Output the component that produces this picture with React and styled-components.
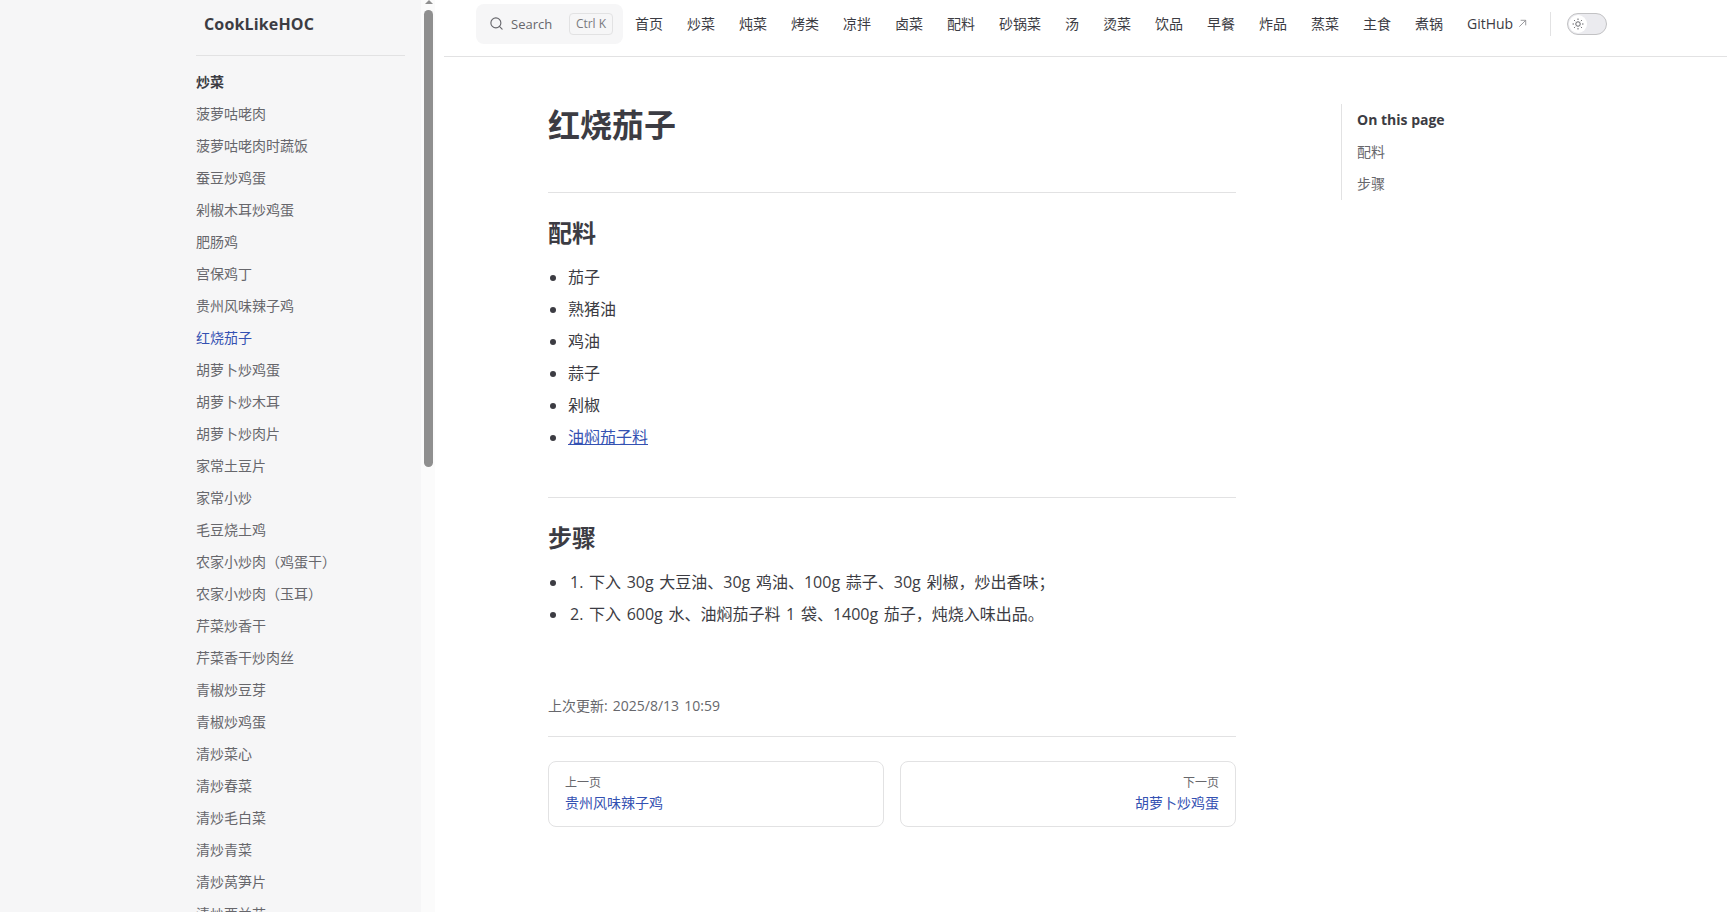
import styled, { createGlobalStyle } from "styled-components";
import { Search } from "lucide-react";

const FONT = `"Open Sans", "Noto Sans CJK SC", sans-serif`;

const GlobalStyle = createGlobalStyle`
  html, body {
    margin: 0;
    height: 100%;
    overflow: hidden;
    background: #ffffff;
  }
  body {
    font-family: ${FONT};
    color: #3c3c43;
  }
  * {
    box-sizing: border-box;
  }
`;

const Page = styled.div`
  display: flex;
  width: 1727px;
  height: 912px;
  overflow: hidden;
`;

const Sidebar = styled.aside`
  flex: none;
  width: 421px;
  height: 912px;
  overflow: hidden;
  background: #f6f6f7;
  padding-left: 196px;
  padding-right: 16px;
`;

const Logo = styled.div`
  height: 48px;
  padding-left: 8px;
  font-size: 16px;
  font-weight: 700;
  line-height: 48px;
  letter-spacing: 0.15px;
  color: #3c3c43;
`;

const SideDivider = styled.div`
  height: 1px;
  margin-top: 7px;
  margin-bottom: 10px;
  background: #e2e2e3;
`;

const SideHeading = styled.div`
  font-size: 14px;
  font-weight: 700;
  line-height: 32px;
  color: #3c3c43;
`;

const SideItem = styled.div`
  font-size: 14px;
  line-height: 32px;
  color: ${({ $active }) => ($active ? "#3451b2" : "#67676c")};
`;

const ScrollTrack = styled.div`
  flex: none;
  width: 14px;
  height: 912px;
  padding-left: 3px;
  background: #fbfbfb;
`;

const ScrollArrow = styled.div`
  width: 0;
  height: 0;
  margin-left: 1px;
  border-left: 4px solid transparent;
  border-right: 4px solid transparent;
  border-bottom: 4px solid #8f8f8f;
`;

const ScrollThumb = styled.div`
  width: 9px;
  height: 457px;
  margin-top: 6px;
  border-radius: 5px;
  background: #8f8f8f;
`;

const Main = styled.div`
  flex: none;
  width: 1292px;
  padding-left: 9px;
`;

const TopBar = styled.header`
  display: flex;
  align-items: center;
  height: 57px;
  padding-left: 32px;
  padding-bottom: 9px;
  border-bottom: 1px solid #e2e2e3;
`;

const SearchBox = styled.div`
  display: flex;
  align-items: center;
  flex: none;
  width: 147px;
  height: 40px;
  padding: 0 10px 0 13px;
  border-radius: 8px;
  background: #f6f6f7;
  color: #67676c;
  font-size: 13px;
`;

const SearchLabel = styled.span`
  margin-left: 7px;
  flex: 1;
`;

const KeyHint = styled.span`
  display: flex;
  align-items: center;
  justify-content: center;
  flex: none;
  width: 44px;
  height: 22px;
  border: 1px solid #e2e2e3;
  border-radius: 4px;
  font-size: 12px;
  color: #7a7a7e;
`;

const NavLinks = styled.nav`
  display: flex;
  align-items: center;
`;

const NavLink = styled.span`
  padding: 0 12px;
  font-size: 14px;
  line-height: 32px;
  color: #3c3c43;
  white-space: nowrap;
`;

const ExternalArrow = styled.svg`
  width: 11px;
  height: 11px;
  margin-left: 4px;
  color: #929295;
`;

const NavDivider = styled.div`
  width: 1px;
  height: 24px;
  margin: 0 16px 0 10px;
  background: #e2e2e3;
`;

const Toggle = styled.div`
  display: flex;
  align-items: center;
  width: 40px;
  height: 22px;
  padding-left: 1px;
  border: 1px solid #c2c2c4;
  border-radius: 11px;
  background: #ebebef;
`;

const ToggleKnob = styled.div`
  display: flex;
  align-items: center;
  justify-content: center;
  width: 18px;
  height: 18px;
  border-radius: 50%;
  background: #ffffff;
  color: #67676c;
`;

const Body = styled.div`
  display: flex;
  padding-left: 104px;
`;

const Article = styled.article`
  flex: none;
  width: 688px;
  padding-top: 48px;
`;

const Title = styled.h1`
  margin: 0;
  font-size: 32px;
  font-weight: 700;
  line-height: 40px;
  color: #3c3c43;
`;

const Section = styled.section`
  margin-top: ${({ $first }) => ($first ? "47px" : "44px")};
  padding-top: 24px;
  border-top: 1px solid #e2e2e3;
`;

const SectionTitle = styled.h2`
  margin: 0 0 12px;
  font-size: 24px;
  font-weight: 700;
  line-height: 32px;
  color: #3c3c43;
`;

const BulletList = styled.ul`
  margin: 0;
  padding: 0 0 0 20px;
`;

const Bullet = styled.li`
  font-size: 16px;
  line-height: 32px;
  color: #3c3c43;
`;

const StepBullet = styled(Bullet)`
  word-spacing: 1.5px;
  & > span {
    padding-left: 2px;
  }
`;

const InlineLink = styled.a`
  color: #3451b2;
  text-decoration: underline;
`;

const Updated = styled.div`
  margin-top: 64px;
  padding-bottom: 18px;
  font-size: 14px;
  line-height: 24px;
  word-spacing: 1.5px;
  color: #67676c;
  border-bottom: 1px solid #e2e2e3;
`;

const Pager = styled.div`
  display: grid;
  grid-template-columns: 1fr 1fr;
  gap: 16px;
  margin-top: 24px;
`;

const PagerCard = styled.div`
  height: 66px;
  padding: 11px 16px;
  border: 1px solid #e2e2e3;
  border-radius: 8px;
  text-align: ${({ $right }) => ($right ? "right" : "left")};
`;

const PagerDesc = styled.div`
  font-size: 12px;
  line-height: 20px;
  color: #67676c;
`;

const PagerTitle = styled.div`
  font-size: 14px;
  line-height: 20px;
  color: #3451b2;
`;

const Toc = styled.aside`
  flex: none;
  align-self: flex-start;
  width: 224px;
  height: 96px;
  margin-top: 47px;
  margin-left: 105px;
  padding-left: 15px;
  border-left: 1px solid #e2e2e3;
`;

const TocTitle = styled.div`
  font-size: 14px;
  font-weight: 700;
  line-height: 32px;
  color: #3c3c43;
`;

const TocItem = styled.div`
  font-size: 14px;
  line-height: 32px;
  color: #67676c;
`;

const SIDE_ITEMS = [
  "菠萝咕咾肉",
  "菠萝咕咾肉时蔬饭",
  "蚕豆炒鸡蛋",
  "剁椒木耳炒鸡蛋",
  "肥肠鸡",
  "宫保鸡丁",
  "贵州风味辣子鸡",
  "红烧茄子",
  "胡萝卜炒鸡蛋",
  "胡萝卜炒木耳",
  "胡萝卜炒肉片",
  "家常土豆片",
  "家常小炒",
  "毛豆烧土鸡",
  "农家小炒肉（鸡蛋干）",
  "农家小炒肉（玉耳）",
  "芹菜炒香干",
  "芹菜香干炒肉丝",
  "青椒炒豆芽",
  "青椒炒鸡蛋",
  "清炒菜心",
  "清炒春菜",
  "清炒毛白菜",
  "清炒青菜",
  "清炒莴笋片",
  "清炒西兰花",
];

const NAV_ITEMS = [
  "首页", "炒菜", "炖菜", "烤类", "凉拌", "卤菜", "配料", "砂锅菜", "汤",
  "烫菜", "饮品", "早餐", "炸品", "蒸菜", "主食", "煮锅",
];

const SunIcon = () => (
  <svg width="12" height="12" viewBox="0 0 24 24" fill="none" stroke="currentColor" strokeWidth="2">
    <circle cx="12" cy="12" r="4.5" />
    <path d="M12 1v3M12 20v3M1 12h3M20 12h3M4.2 4.2l2.1 2.1M17.7 17.7l2.1 2.1M4.2 19.8l2.1-2.1M17.7 6.3l2.1-2.1" />
  </svg>
);

const App = () => {
  return (
    <Page>
      <GlobalStyle />
      <Sidebar>
        <Logo>CookLikeHOC</Logo>
        <SideDivider />
        <SideHeading>炒菜</SideHeading>
        {SIDE_ITEMS.map((name) => (
          <SideItem key={name} $active={name === "红烧茄子"}>
            {name}
          </SideItem>
        ))}
      </Sidebar>
      <ScrollTrack>
        <ScrollArrow />
        <ScrollThumb />
      </ScrollTrack>
      <Main>
        <TopBar>
          <SearchBox>
            <Search size={15} strokeWidth={1.8} />
            <SearchLabel>Search</SearchLabel>
            <KeyHint>Ctrl K</KeyHint>
          </SearchBox>
          <NavLinks>
            {NAV_ITEMS.map((name) => (
              <NavLink key={name}>{name}</NavLink>
            ))}
            <NavLink>
              GitHub
              <ExternalArrow viewBox="0 0 24 24" fill="none" stroke="currentColor" strokeWidth="2">
                <path d="M5 19L19 5M8 5h11v11" />
              </ExternalArrow>
            </NavLink>
          </NavLinks>
          <NavDivider />
          <Toggle>
            <ToggleKnob>
              <SunIcon />
            </ToggleKnob>
          </Toggle>
        </TopBar>
        <Body>
          <Article>
            <Title>红烧茄子</Title>
            <Section $first>
              <SectionTitle>配料</SectionTitle>
              <BulletList>
                <Bullet>茄子</Bullet>
                <Bullet>熟猪油</Bullet>
                <Bullet>鸡油</Bullet>
                <Bullet>蒜子</Bullet>
                <Bullet>剁椒</Bullet>
                <Bullet>
                  <InlineLink>油焖茄子料</InlineLink>
                </Bullet>
              </BulletList>
            </Section>
            <Section>
              <SectionTitle>步骤</SectionTitle>
              <BulletList>
                <StepBullet>
                  <span>1. 下入 30g 大豆油、30g 鸡油、100g 蒜子、30g 剁椒，炒出香味；</span>
                </StepBullet>
                <StepBullet>
                  <span>2. 下入 600g 水、油焖茄子料 1 袋、1400g 茄子，炖烧入味出品。</span>
                </StepBullet>
              </BulletList>
            </Section>
            <Updated>上次更新: 2025/8/13 10:59</Updated>
            <Pager>
              <PagerCard>
                <PagerDesc>上一页</PagerDesc>
                <PagerTitle>贵州风味辣子鸡</PagerTitle>
              </PagerCard>
              <PagerCard $right>
                <PagerDesc>下一页</PagerDesc>
                <PagerTitle>胡萝卜炒鸡蛋</PagerTitle>
              </PagerCard>
            </Pager>
          </Article>
          <Toc>
            <TocTitle>On this page</TocTitle>
            <TocItem>配料</TocItem>
            <TocItem>步骤</TocItem>
          </Toc>
        </Body>
      </Main>
    </Page>
  );
};

export default App;
